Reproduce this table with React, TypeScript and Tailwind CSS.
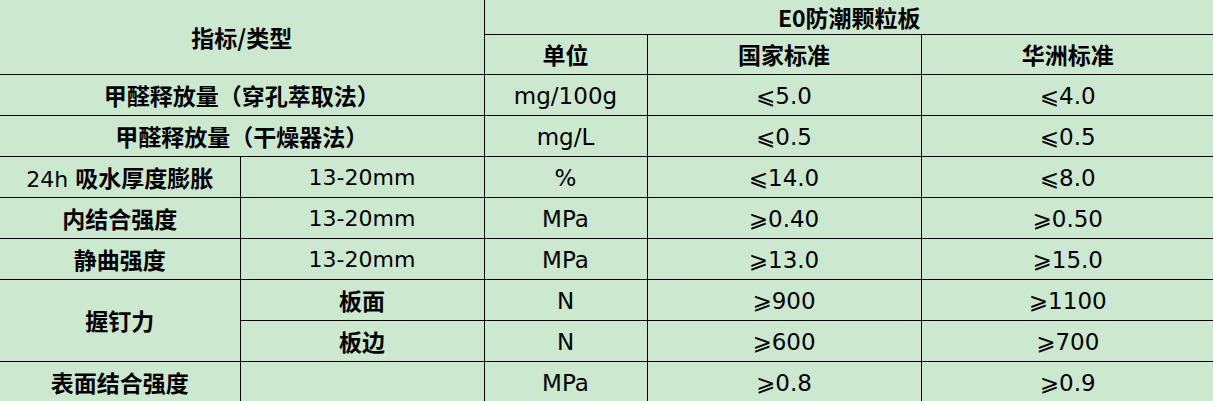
import React from "react";

const cell = "border border-black p-0 pt-[3px] text-center align-middle";
const num = "border border-black p-0 pt-[3px] text-center align-middle text-[23px]";
const zh = "font-['Noto_Sans_CJK_SC',sans-serif] font-semibold text-[23px]";

function Zh({ children }: { children: React.ReactNode }) {
  return <span className={zh}>{children}</span>;
}

export default function App() {
  return (
    <div className="w-[1213px] h-[401px] overflow-hidden bg-[#cce8cf]">
      <table className="table-fixed border-collapse border-hidden w-[1214px] text-[22px] leading-none text-black font-['DejaVu_Sans','Noto_Sans_CJK_SC',sans-serif]">
        <colgroup>
          <col className="w-[240px]" />
          <col className="w-[244px]" />
          <col className="w-[163px]" />
          <col className="w-[274px]" />
          <col className="w-[293px]" />
        </colgroup>
        <tbody>
          <tr className="h-[34px]">
            <td colSpan={2} rowSpan={2} className={cell}>
              <Zh>指标/类型</Zh>
            </td>
            <td colSpan={3} className={cell}>
              <Zh>E0防潮颗粒板</Zh>
            </td>
          </tr>
          <tr className="h-[40px]">
            <td className={cell}>
              <Zh>单位</Zh>
            </td>
            <td className={cell}>
              <Zh>国家标准</Zh>
            </td>
            <td className={cell}>
              <Zh>华洲标准</Zh>
            </td>
          </tr>
          <tr className="h-[41px]">
            <td colSpan={2} className={cell}>
              <Zh>甲醛释放量（穿孔萃取法）</Zh>
            </td>
            <td className={num}>mg/100g</td>
            <td className={num}>⩽5.0</td>
            <td className={num}>⩽4.0</td>
          </tr>
          <tr className="h-[41px]">
            <td colSpan={2} className={cell}>
              <Zh>甲醛释放量（干燥器法）</Zh>
            </td>
            <td className={num}>mg/L</td>
            <td className={num}>⩽0.5</td>
            <td className={num}>⩽0.5</td>
          </tr>
          <tr className="h-[41px]">
            <td className={cell}>
              24h <Zh>吸水厚度膨胀</Zh>
            </td>
            <td className={cell}>13-20mm</td>
            <td className={num}>%</td>
            <td className={num}>⩽14.0</td>
            <td className={num}>⩽8.0</td>
          </tr>
          <tr className="h-[41px]">
            <td className={cell}>
              <Zh>内结合强度</Zh>
            </td>
            <td className={cell}>13-20mm</td>
            <td className={num}>MPa</td>
            <td className={num}>⩾0.40</td>
            <td className={num}>⩾0.50</td>
          </tr>
          <tr className="h-[41px]">
            <td className={cell}>
              <Zh>静曲强度</Zh>
            </td>
            <td className={cell}>13-20mm</td>
            <td className={num}>MPa</td>
            <td className={num}>⩾13.0</td>
            <td className={num}>⩾15.0</td>
          </tr>
          <tr className="h-[41px]">
            <td rowSpan={2} className={cell}>
              <Zh>握钉力</Zh>
            </td>
            <td className={cell}>
              <Zh>板面</Zh>
            </td>
            <td className={num}>N</td>
            <td className={num}>⩾900</td>
            <td className={num}>⩾1100</td>
          </tr>
          <tr className="h-[41px]">
            <td className={cell}>
              <Zh>板边</Zh>
            </td>
            <td className={num}>N</td>
            <td className={num}>⩾600</td>
            <td className={num}>⩾700</td>
          </tr>
          <tr className="h-[41px]">
            <td className={cell}>
              <Zh>表面结合强度</Zh>
            </td>
            <td className={cell}></td>
            <td className={num}>MPa</td>
            <td className={num}>⩾0.8</td>
            <td className={num}>⩾0.9</td>
          </tr>
        </tbody>
      </table>
    </div>
  );
}
